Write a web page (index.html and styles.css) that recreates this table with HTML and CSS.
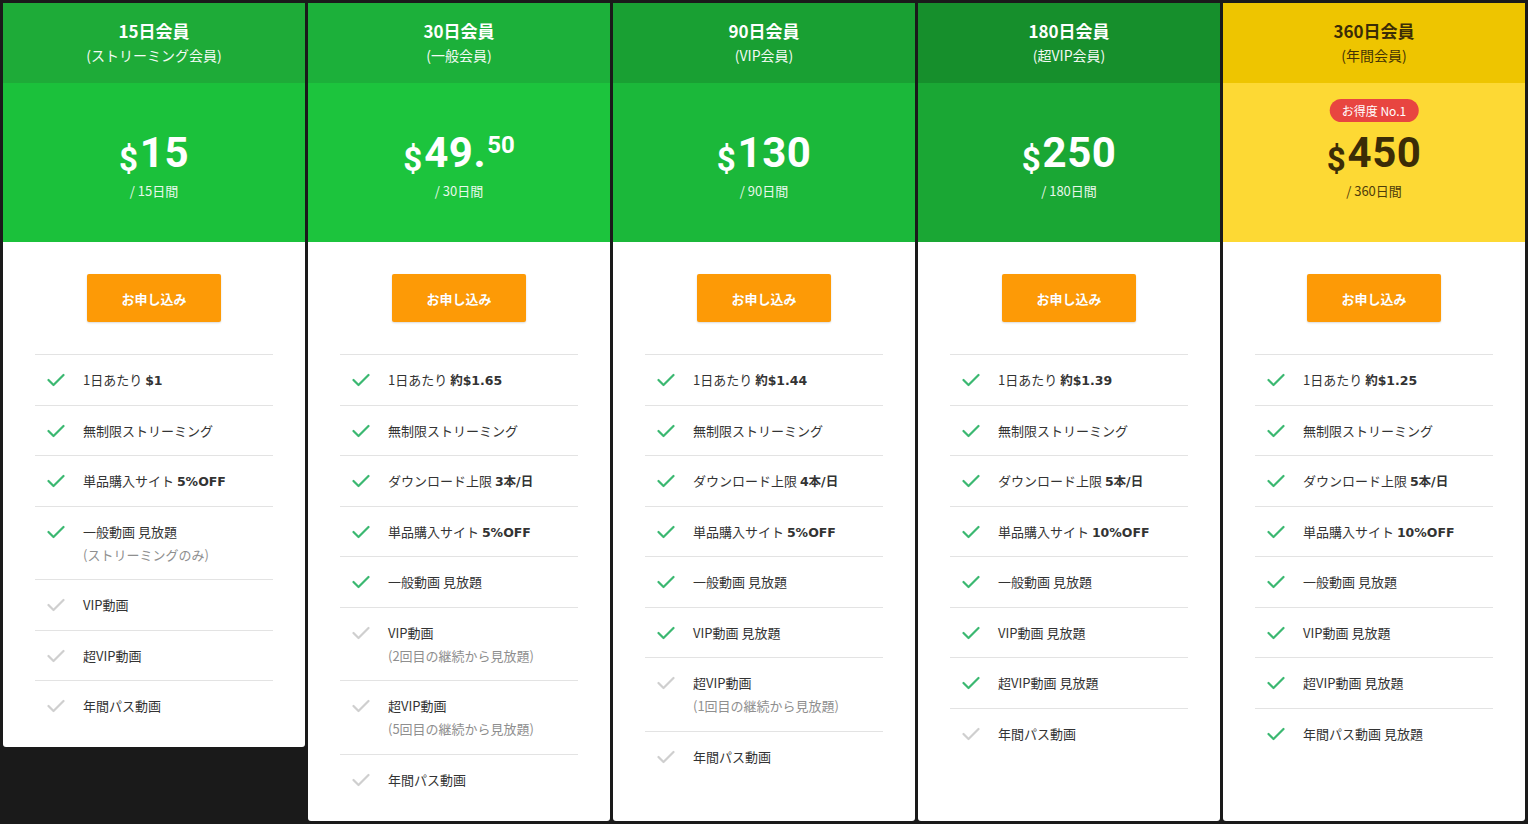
FILE: index.html
```html
<!DOCTYPE html>
<html lang="ja">
<head>
<meta charset="utf-8">
<title>会員プラン</title>
<link rel="stylesheet" href="styles.css">
</head>
<body>
<svg width="0" height="0" class="defs" aria-hidden="true">
  <defs>
    <symbol id="chk" viewBox="0 0 18 14">
      <polyline points="1.5,7 6.5,12 16.5,2" fill="none" stroke="currentColor" stroke-width="2.2" stroke-linecap="round" stroke-linejoin="round"/>
    </symbol>
  </defs>
</svg>
<main class="plans">

  <section class="card c1 short">
    <header class="head"><h2 class="title">15日会員</h2><p class="sub">(ストリーミング会員)</p></header>
    <div class="price"><div class="amount"><span class="cur">$</span><span class="num">15</span></div><p class="per">/ 15日間</p></div>
    <div class="body">
      <a class="btn" href="#">お申し込み</a>
      <ul class="feats">
        <li class="on"><svg class="ic"><use href="#chk"/></svg><span class="txt">1日あたり <b>$1</b></span></li>
        <li class="on"><svg class="ic"><use href="#chk"/></svg><span class="txt">無制限ストリーミング</span></li>
        <li class="on"><svg class="ic"><use href="#chk"/></svg><span class="txt">単品購入サイト <b>5%OFF</b></span></li>
        <li class="on"><svg class="ic"><use href="#chk"/></svg><span class="txt">一般動画 見放題<small>(ストリーミングのみ)</small></span></li>
        <li class="off"><svg class="ic"><use href="#chk"/></svg><span class="txt">VIP動画</span></li>
        <li class="off"><svg class="ic"><use href="#chk"/></svg><span class="txt">超VIP動画</span></li>
        <li class="off"><svg class="ic"><use href="#chk"/></svg><span class="txt">年間パス動画</span></li>
      </ul>
    </div>
  </section>

  <section class="card c2">
    <header class="head"><h2 class="title">30日会員</h2><p class="sub">(一般会員)</p></header>
    <div class="price"><div class="amount"><span class="cur">$</span><span class="num">49.</span><span class="cents">50</span></div><p class="per">/ 30日間</p></div>
    <div class="body">
      <a class="btn" href="#">お申し込み</a>
      <ul class="feats">
        <li class="on"><svg class="ic"><use href="#chk"/></svg><span class="txt">1日あたり <b>約$1.65</b></span></li>
        <li class="on"><svg class="ic"><use href="#chk"/></svg><span class="txt">無制限ストリーミング</span></li>
        <li class="on"><svg class="ic"><use href="#chk"/></svg><span class="txt">ダウンロード上限 <b>3本/日</b></span></li>
        <li class="on"><svg class="ic"><use href="#chk"/></svg><span class="txt">単品購入サイト <b>5%OFF</b></span></li>
        <li class="on"><svg class="ic"><use href="#chk"/></svg><span class="txt">一般動画 見放題</span></li>
        <li class="off"><svg class="ic"><use href="#chk"/></svg><span class="txt">VIP動画<small>(2回目の継続から見放題)</small></span></li>
        <li class="off"><svg class="ic"><use href="#chk"/></svg><span class="txt">超VIP動画<small>(5回目の継続から見放題)</small></span></li>
        <li class="off"><svg class="ic"><use href="#chk"/></svg><span class="txt">年間パス動画</span></li>
      </ul>
    </div>
  </section>

  <section class="card c3">
    <header class="head"><h2 class="title">90日会員</h2><p class="sub">(VIP会員)</p></header>
    <div class="price"><div class="amount"><span class="cur">$</span><span class="num">130</span></div><p class="per">/ 90日間</p></div>
    <div class="body">
      <a class="btn" href="#">お申し込み</a>
      <ul class="feats">
        <li class="on"><svg class="ic"><use href="#chk"/></svg><span class="txt">1日あたり <b>約$1.44</b></span></li>
        <li class="on"><svg class="ic"><use href="#chk"/></svg><span class="txt">無制限ストリーミング</span></li>
        <li class="on"><svg class="ic"><use href="#chk"/></svg><span class="txt">ダウンロード上限 <b>4本/日</b></span></li>
        <li class="on"><svg class="ic"><use href="#chk"/></svg><span class="txt">単品購入サイト <b>5%OFF</b></span></li>
        <li class="on"><svg class="ic"><use href="#chk"/></svg><span class="txt">一般動画 見放題</span></li>
        <li class="on"><svg class="ic"><use href="#chk"/></svg><span class="txt">VIP動画 見放題</span></li>
        <li class="off"><svg class="ic"><use href="#chk"/></svg><span class="txt">超VIP動画<small>(1回目の継続から見放題)</small></span></li>
        <li class="off"><svg class="ic"><use href="#chk"/></svg><span class="txt">年間パス動画</span></li>
      </ul>
    </div>
  </section>

  <section class="card c4">
    <header class="head"><h2 class="title">180日会員</h2><p class="sub">(超VIP会員)</p></header>
    <div class="price"><div class="amount"><span class="cur">$</span><span class="num">250</span></div><p class="per">/ 180日間</p></div>
    <div class="body">
      <a class="btn" href="#">お申し込み</a>
      <ul class="feats">
        <li class="on"><svg class="ic"><use href="#chk"/></svg><span class="txt">1日あたり <b>約$1.39</b></span></li>
        <li class="on"><svg class="ic"><use href="#chk"/></svg><span class="txt">無制限ストリーミング</span></li>
        <li class="on"><svg class="ic"><use href="#chk"/></svg><span class="txt">ダウンロード上限 <b>5本/日</b></span></li>
        <li class="on"><svg class="ic"><use href="#chk"/></svg><span class="txt">単品購入サイト <b>10%OFF</b></span></li>
        <li class="on"><svg class="ic"><use href="#chk"/></svg><span class="txt">一般動画 見放題</span></li>
        <li class="on"><svg class="ic"><use href="#chk"/></svg><span class="txt">VIP動画 見放題</span></li>
        <li class="on"><svg class="ic"><use href="#chk"/></svg><span class="txt">超VIP動画 見放題</span></li>
        <li class="off"><svg class="ic"><use href="#chk"/></svg><span class="txt">年間パス動画</span></li>
      </ul>
    </div>
  </section>

  <section class="card c5">
    <header class="head"><h2 class="title">360日会員</h2><p class="sub">(年間会員)</p></header>
    <div class="price"><span class="badge">お得度 No.1</span><div class="amount"><span class="cur">$</span><span class="num">450</span></div><p class="per">/ 360日間</p></div>
    <div class="body">
      <a class="btn" href="#">お申し込み</a>
      <ul class="feats">
        <li class="on"><svg class="ic"><use href="#chk"/></svg><span class="txt">1日あたり <b>約$1.25</b></span></li>
        <li class="on"><svg class="ic"><use href="#chk"/></svg><span class="txt">無制限ストリーミング</span></li>
        <li class="on"><svg class="ic"><use href="#chk"/></svg><span class="txt">ダウンロード上限 <b>5本/日</b></span></li>
        <li class="on"><svg class="ic"><use href="#chk"/></svg><span class="txt">単品購入サイト <b>10%OFF</b></span></li>
        <li class="on"><svg class="ic"><use href="#chk"/></svg><span class="txt">一般動画 見放題</span></li>
        <li class="on"><svg class="ic"><use href="#chk"/></svg><span class="txt">VIP動画 見放題</span></li>
        <li class="on"><svg class="ic"><use href="#chk"/></svg><span class="txt">超VIP動画 見放題</span></li>
        <li class="on"><svg class="ic"><use href="#chk"/></svg><span class="txt">年間パス動画 見放題</span></li>
      </ul>
    </div>
  </section>

</main>
</body>
</html>
```

FILE: styles.css
```css
* { box-sizing: border-box; }
html, body { margin: 0; padding: 0; }
body {
  background: #1a1a1a;
  font-family: "Noto Sans CJK JP", "Noto Sans", sans-serif;
  color: #333;
  height: 824px;
  overflow: hidden;
}
.defs { position: absolute; width: 0; height: 0; }
.plans {
  display: flex;
  gap: 3px;
  padding: 3px 3px 3px 3px;
  align-items: stretch;
  height: 824px;
}
.card {
  width: 302px;
  flex: 0 0 302px;
  background: #fff;
  border-radius: 0 0 3px 3px;
  overflow: hidden;
  display: flex;
  flex-direction: column;
  padding-bottom: 16px;
}
.card.short { align-self: flex-start; }

.head {
  flex: 0 0 80px;
  height: 80px;
  display: flex;
  flex-direction: column;
  align-items: center;
  padding-top: 16px;
  color: #fff;
  text-align: center;
}
.title {
  margin: 0;
  font-size: 17px;
  line-height: 24px;
  font-weight: 700;
}
.sub {
  margin: 0;
  font-size: 14px;
  line-height: 24px;
  opacity: .95;
}
.price {
  position: relative;
  flex: 0 0 159px;
  height: 159px;
  display: flex;
  flex-direction: column;
  align-items: center;
  padding-top: 44px;
  color: #fff;
}
.amount {
  display: flex;
  align-items: flex-start;
  font-family: Roboto, "Liberation Sans", sans-serif;
  font-weight: 700;
  height: 52px;
}
.cur { font-size: 33px; line-height: 32px; margin-top: 17px; margin-right: 2px; }
.num { font-size: 42px; line-height: 52px; letter-spacing: .5px; }
.cents { font-size: 24px; line-height: 24px; margin-top: 6px; margin-left: 1px; }
.per {
  margin: 4px 0 0;
  font-size: 13px;
  line-height: 16px;
  opacity: .9;
}
.badge {
  position: absolute;
  top: 16px;
  left: 50%;
  transform: translateX(-50%);
  background: #e84540;
  color: #fff;
  font-size: 12px;
  line-height: 23px;
  height: 23px;
  padding: 0 12px;
  border-radius: 12px;
  white-space: nowrap;
}

.c1 .head { background: #1eab38; }
.c1 .price { background: #1bc13b; }
.c2 .head { background: #1cb03a; }
.c2 .price { background: #1cc43d; }
.c3 .head { background: #19a033; }
.c3 .price { background: #1bb83a; }
.c4 .head { background: #168f2c; }
.c4 .price { background: #1aa734; }
.c5 .head { background: #eec500; color: #3b2c06; }
.c5 .price { background: #fdd934; color: #3b2c06; }

.body {
  display: flex;
  flex-direction: column;
  align-items: center;
  padding: 32px 32px 0;
}
.btn {
  display: flex;
  align-items: center;
  justify-content: center;
  width: 134px;
  height: 48px;
  flex: 0 0 48px;
  background: #fd9a06;
  color: #fff;
  font-size: 13px;
  font-weight: 700;
  text-decoration: none;
  border-radius: 2px;
  box-shadow: 0 1px 2px rgba(0,0,0,.15);
  text-shadow: 0 0 1px rgba(0,0,0,.1);
}
.feats {
  list-style: none;
  margin: 32px 0 0;
  padding: 0;
  width: 100%;
}
.feats li {
  display: flex;
  align-items: flex-start;
  border-top: 1px solid #e3e3e3;
  padding: 13.25px 0 13.25px 12px;
  font-size: 13px;
  line-height: 23px;
}
.ic {
  width: 18px;
  height: 14px;
  flex: 0 0 18px;
  margin-top: 5px;
  margin-right: 18px;
}
.on .ic { color: #3bb871; }
.off .ic { color: #cfcfcf; }
.txt { display: block; white-space: nowrap; height: auto; }
.txt > small { margin-top: 0; }
.feats b {
  font-weight: 700;
  font-family: "DejaVu Sans", "Noto Sans CJK JP", sans-serif;
  font-size: 12.5px;
  line-height: 1;
}
.feats small {
  display: block;
  font-size: 13px;
  line-height: 23px;
  color: #8f8f8f;
}
```
